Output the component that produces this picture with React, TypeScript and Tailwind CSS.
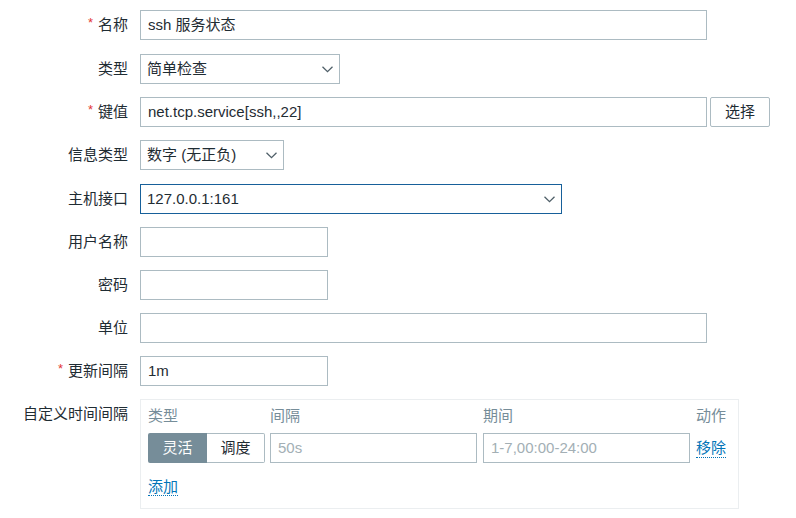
import type { ReactNode } from "react";

const FONT = { fontFamily: '"Liberation Sans", "Noto Sans CJK SC", Arial, sans-serif' };

function Chevron() {
  return (
    <svg width="11" height="7" viewBox="0 0 11 7" className="shrink-0">
      <polyline points="0.5,0.8 5.5,5.6 10.5,0.8" fill="none" stroke="#4f5f68" strokeWidth="1.3" />
    </svg>
  );
}

function Row({ label, required, children, className = "" }: { label: string; required?: boolean; children: ReactNode; className?: string }) {
  return (
    <div className={`flex items-start ${className}`}>
      <div className="w-[128px] h-[30px] flex items-center justify-end text-[15px] text-[#1f2c33] whitespace-nowrap">
        {required && <span className="text-[#e33734] text-[13px] mr-[5px] -mt-[4px]">*</span>}
        {label}
      </div>
      <div className="ml-[12px] flex items-start">{children}</div>
    </div>
  );
}

function TextBox({ width, value = "", placeholder = "", className = "" }: { width: string; value?: string; placeholder?: string; className?: string }) {
  return (
    <div className={`${width} h-[30px] border border-[#acbbc2] bg-white flex items-center pl-[7px] text-[15px] ${className}`}>
      {value ? <span className="text-[#1f2c33]">{value}</span> : <span className="text-[#a3afb5]">{placeholder}</span>}
    </div>
  );
}

function SelectBox({ width, value, focused }: { width: string; value: string; focused?: boolean }) {
  return (
    <div
      className={`${width} h-[30px] border bg-white flex items-center justify-between pl-[6px] pr-[6px] text-[15px] text-[#1f2c33] ${
        focused ? "border-[#17609a]" : "border-[#acbbc2]"
      }`}
    >
      <span>{value}</span>
      <Chevron />
    </div>
  );
}

function Link({ children }: { children: ReactNode }) {
  return <span className="text-[15px] leading-[18px] text-[#0275b8] border-b border-dotted border-[#0275b8]">{children}</span>;
}

export default function App() {
  return (
    <div className="w-[796px] h-[518px] bg-white pt-[10px]" style={FONT}>
      <div className="flex flex-col gap-[13px]">
        <Row label="名称" required>
          <TextBox width="w-[567px]" value="ssh 服务状态" />
        </Row>
        <Row label="类型" className="mt-px">
          <SelectBox width="w-[200px]" value="简单检查" />
        </Row>
        <Row label="键值" required>
          <TextBox width="w-[567px]" value="net.tcp.service[ssh,,22]" />
          <button className="ml-[3px] w-[60px] h-[30px] border border-[#acbbc2] rounded-[2px] bg-white text-[15px] text-[#1f2c33]">
            选择
          </button>
        </Row>
        <Row label="信息类型">
          <SelectBox width="w-[144px]" value="数字 (无正负)" />
        </Row>
        <Row label="主机接口" className="mt-px">
          <SelectBox width="w-[422px]" value="127.0.0.1:161" focused />
        </Row>
        <Row label="用户名称">
          <TextBox width="w-[188px]" />
        </Row>
        <Row label="密码">
          <TextBox width="w-[188px]" />
        </Row>
        <Row label="单位">
          <TextBox width="w-[567px]" />
        </Row>
        <Row label="更新间隔" required>
          <TextBox width="w-[188px]" value="1m" />
        </Row>
        <Row label="自定义时间间隔">
          {/* custom intervals table */}
          <div className="w-[599px] h-[110px] border border-[#ebeef0] pl-[7px] pt-[7px]">
            <div className="flex text-[15px] leading-[18px] text-[#768d99]">
              <div className="w-[122px]">类型</div>
              <div className="w-[213px]">间隔</div>
              <div className="w-[213px]">期间</div>
              <div>动作</div>
            </div>
            <div className="flex items-center mt-[8px]">
              <div className="flex w-[117px] h-[30px] text-[15px]">
                <div className="w-[59px] h-full bg-[#768d99] text-white rounded-l-[2px] flex items-center justify-center">灵活</div>
                <div className="flex-1 h-full border border-l-0 border-[#acbbc2] rounded-r-[2px] text-[#1f2c33] flex items-center justify-center">
                  调度
                </div>
              </div>
              <TextBox width="w-[207px]" placeholder="50s" className="ml-[5px]" />
              <TextBox width="w-[207px]" placeholder="1-7,00:00-24:00" className="ml-[6px]" />
              <div className="ml-[6px] flex items-center">
                <Link>移除</Link>
              </div>
            </div>
            <div className="mt-[12px]">
              <Link>添加</Link>
            </div>
          </div>
        </Row>
      </div>
    </div>
  );
}
